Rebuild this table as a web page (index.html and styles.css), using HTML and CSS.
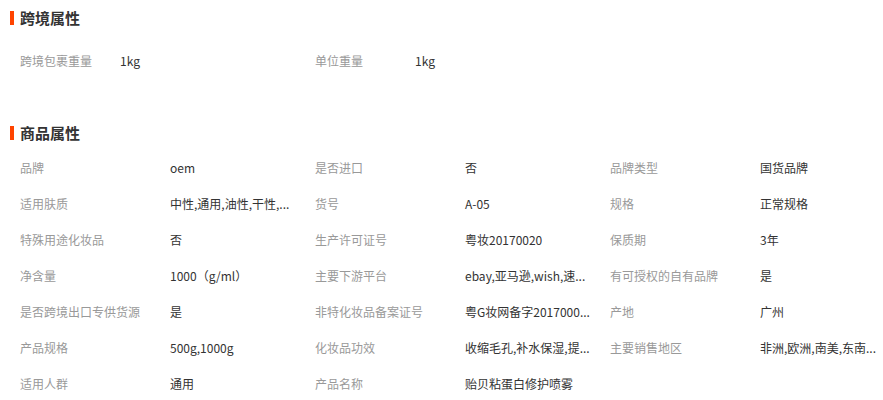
FILE: index.html
```html
<!DOCTYPE html>
<html lang="zh-CN">
<head>
    <meta charset="UTF-8">
    <meta name="viewport" content="width=device-width, initial-scale=1.0">
    <title>商品属性</title>
    <link rel="stylesheet" href="styles.css">
</head>
<body>
    <div class="attr-box">
        <h3 class="attr-title">跨境属性</h3>
        <ul class="attr-list attr-list-short">
            <li><span class="attr-name">跨境包裹重量</span><span class="attr-value">1kg</span></li>
            <li><span class="attr-name">单位重量</span><span class="attr-value">1kg</span></li>
        </ul>

        <h3 class="attr-title attr-title-goods">商品属性</h3>
        <ul class="attr-list">
            <li><span class="attr-name">品牌</span><span class="attr-value">oem</span></li>
            <li><span class="attr-name">是否进口</span><span class="attr-value">否</span></li>
            <li><span class="attr-name">品牌类型</span><span class="attr-value">国货品牌</span></li>
            <li><span class="attr-name">适用肤质</span><span class="attr-value">中性,通用,油性,干性,...</span></li>
            <li><span class="attr-name">货号</span><span class="attr-value">A-05</span></li>
            <li><span class="attr-name">规格</span><span class="attr-value">正常规格</span></li>
            <li><span class="attr-name">特殊用途化妆品</span><span class="attr-value">否</span></li>
            <li><span class="attr-name">生产许可证号</span><span class="attr-value">粤妆20170020</span></li>
            <li><span class="attr-name">保质期</span><span class="attr-value">3年</span></li>
            <li><span class="attr-name">净含量</span><span class="attr-value">1000（g/ml）</span></li>
            <li><span class="attr-name">主要下游平台</span><span class="attr-value">ebay,亚马逊,wish,速...</span></li>
            <li><span class="attr-name">有可授权的自有品牌</span><span class="attr-value">是</span></li>
            <li><span class="attr-name">是否跨境出口专供货源</span><span class="attr-value">是</span></li>
            <li><span class="attr-name">非特化妆品备案证号</span><span class="attr-value">粤G妆网备字2017000...</span></li>
            <li><span class="attr-name">产地</span><span class="attr-value">广州</span></li>
            <li><span class="attr-name">产品规格</span><span class="attr-value">500g,1000g</span></li>
            <li><span class="attr-name">化妆品功效</span><span class="attr-value">收缩毛孔,补水保湿,提...</span></li>
            <li><span class="attr-name">主要销售地区</span><span class="attr-value">非洲,欧洲,南美,东南...</span></li>
            <li><span class="attr-name">适用人群</span><span class="attr-value">通用</span></li>
            <li><span class="attr-name">产品名称</span><span class="attr-value">贻贝粘蛋白修护喷雾</span></li>
        </ul>
    </div>
</body>
</html>
```

FILE: styles.css
```css
body {
    margin: 0;
    padding: 0;
    background-color: #fff;
    font-family: "Noto Sans CJK SC", "Liberation Sans", sans-serif;
    font-size: 12px;
    color: #333;
}

.attr-box {
    padding: 8px 0 0 10px;
}

.attr-title {
    position: relative;
    margin: 0;
    padding-left: 10px;
    height: 20px;
    line-height: 20px;
    font-size: 15px;
    font-weight: bold;
    color: #333;
}

/* orange marker before the heading */
.attr-title::before {
    content: "";
    position: absolute;
    left: 0;
    top: 3px;
    width: 4px;
    height: 14px;
    background-color: #ff4400;
}

.attr-title-goods {
    margin-top: 44px;
}

.attr-list {
    list-style: none;
    margin: 7px 0 0 0;
    padding: 0 0 0 10px;
    display: grid;
    grid-template-columns: repeat(3, 295px);
}

.attr-list-short {
    margin-top: 15px;
}

.attr-list li {
    display: flex;
    height: 36px;
    line-height: 36px;
}

.attr-name {
    width: 150px;
    flex-shrink: 0;
    color: #999;
    white-space: nowrap;
}

.attr-list-short .attr-name {
    width: 100px;
}

.attr-value {
    white-space: nowrap;
    color: #333;
}
```
